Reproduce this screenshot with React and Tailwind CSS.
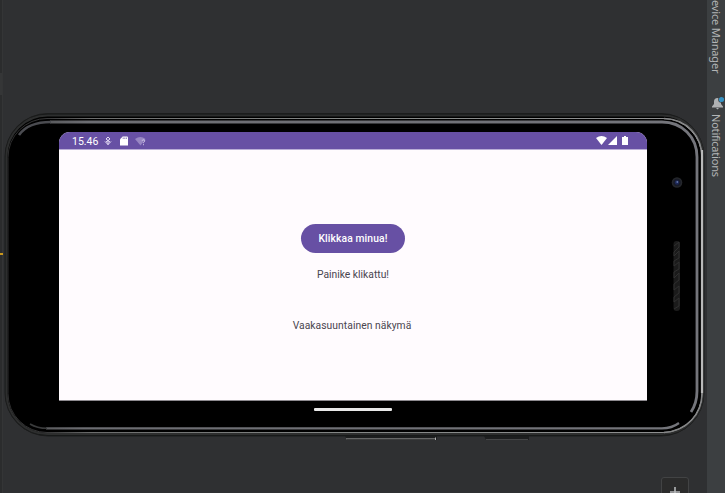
function DeviceFrame() {
  return (
    <svg className="absolute inset-0" width="704" height="493" viewBox="3 0 704 493" fill="none">
      <defs>
        <linearGradient id="edge" x1="0" y1="0" x2="1" y2="0">
          <stop offset="0" stopColor="#5a5b5e" />
          <stop offset="0.06" stopColor="#6c6d72" />
          <stop offset="1" stopColor="#74757b" />
        </linearGradient>
        <linearGradient id="rim" x1="0" y1="0" x2="1" y2="0">
          <stop offset="0" stopColor="#2b2b2c" />
          <stop offset="0.06" stopColor="#39393a" />
          <stop offset="0.12" stopColor="#6c6d6d" />
          <stop offset="0.5" stopColor="#858887" />
          <stop offset="0.95" stopColor="#8e8f90" />
          <stop offset="1" stopColor="#b4b4b4" />
        </linearGradient>
      </defs>
      <path d="M345 436H437V440H347ZM484 436H529V440H486Z" fill="#1d1e1f" />
      <path d="M346 438.800H435" stroke="#858585" />
      <path d="M435.500 437.500V440" stroke="#b0b0b0" />
      <path d="M486 439.500H528" stroke="#454647" />
      <rect x="5" y="113.500" width="699" height="322.500" rx="43" fill="#151616" stroke="#1b1c1c" />
      <rect x="6.500" y="115.500" width="696.500" height="318.500" rx="41" fill="#000" stroke="#2d2e2e" strokeWidth="2" />
      <rect x="8" y="118.500" width="694" height="314" rx="39" fill="#000" stroke="url(#rim)" />
      <path d="M664 118.500C688 119 702 137 702 158V393C702 414 687 431 664 432.500" stroke="#858687" strokeWidth="1.500" />
      <path d="M702 150V393" stroke="#b9b9b9" strokeWidth="2.200" />
      <path d="M50 122H662C682 122 697 137 697 157V391C697 399 695 406 691 412" stroke="url(#edge)" strokeWidth="2.800" />
      <path d="M46 428.300H662C670 428.300 675 426 679 423" stroke="url(#edge)" strokeWidth="2.200" />
      <path d="M19 135C25 126.500 36 122 51 122" stroke="#4a4b50" strokeWidth="2.600" />
      <path d="M30 424C35 427 41 428.300 47 428.300" stroke="#3a3b3c" strokeWidth="1.600" />
      <circle cx="677" cy="182.500" r="5.300" fill="#24262b" />
      <circle cx="677" cy="182.500" r="3.700" fill="#181b27" />
      <circle cx="677" cy="182.500" r="2.200" fill="#1d2858" />
      <circle cx="677.300" cy="182" r="0.900" fill="#6175a8" />
      <rect x="673.500" y="241" width="6.500" height="70" rx="3" fill="#1b1b1b" />
      <path d="M674 246L679 242V247L674 252V256L679 251V258L674 261V266L679 262V269L674 272V278L679 273V280L674 284V290L679 286V293L674 297V302L679 298V306L674 309" stroke="#303030" />
    </svg>
  );
}

function StatusBar() {
  return (
    <div className="flex h-[17px] shrink-0 items-center bg-[#6750a4] pl-[13px] pr-[19px] text-white">
      <span className="mt-[3px] w-[32px] text-[10.5px] leading-none">15.46</span>
      <svg className="mt-px" width="8" height="10" viewBox="0 0 8 10" fill="none" stroke="#e6ddf5" strokeWidth="1">
        <path d="M4 1L6 3L2 6M4 1L2 3L6 6M1 5.500L4 8.500L7 5.500M4 4V9" />
      </svg>
      <svg className="ml-[8px]" width="8" height="10" viewBox="0 0 8 10">
        <path d="M2.700 0.500H7A1 1 0 0 1 8 1.500V9.500H0V3.200Z" fill="#fff" />
        <path d="M3.200 1.500V3M4.800 1.500V3M6.400 1.500V3" stroke="#6750a4" strokeWidth="0.700" />
      </svg>
      <svg className="ml-[7px] mt-px overflow-visible" width="11" height="9" viewBox="0 0 11 9">
        <path d="M0 2Q5.500 -2 10.500 2L5.500 8.500Z" fill="#9887c3" />
        <path d="M7.200 3.700Q7.300 2.800 8.500 2.800Q9.800 2.800 9.800 3.900Q9.800 4.700 8.500 5.500V6.200M8.500 7.200V8.200" fill="none" stroke="#d9d0ec" strokeWidth="0.900" />
      </svg>
      <svg className="ml-auto" width="11" height="9" viewBox="0 0 11 9">
        <path d="M0 2Q5.500 -2 11 2L5.500 9Z" fill="#fff" />
      </svg>
      <svg className="ml-px" width="9" height="9" viewBox="0 0 9 9">
        <path d="M9 0V9H0Z" fill="#fff" />
      </svg>
      <svg className="ml-[5px]" width="6" height="9" viewBox="0 0 6 9">
        <path d="M2 0H4V1H6V9H0V1H2Z" fill="#fff" />
      </svg>
    </div>
  );
}

function PhoneScreen() {
  return (
    <div className="relative ml-[56px] mt-[132px] flex h-[269px] w-[588px] shrink-0 flex-col overflow-hidden rounded-t-[11px] border-b border-[#8d8a8f] bg-[#fffbfe] font-[Roboto,sans-serif]">
      <StatusBar />
      <div className="h-px shrink-0 bg-[#b9add6]" />
      <div className="flex flex-col items-center pt-[74px] text-[#49454f]">
        <button className="h-[29px] w-[104px] rounded-full bg-[#6750a4] pt-[2px] text-[10.3px] font-medium leading-none tracking-[0.12px] text-white">
          Klikkaa minua!
        </button>
        <p className="mt-[14px] text-[10.3px] leading-[16px]">Painike klikattu!</p>
        <p className="mr-[2px] mt-[35px] text-[10.3px] leading-[16px] tracking-[0.05px]">Vaakasuuntainen näkymä</p>
      </div>
    </div>
  );
}

function ToolStrip() {
  return (
    <aside className="flex w-[18px] shrink-0 flex-col items-center bg-[#3c3f41] font-['Noto_Sans',sans-serif] text-[11px] leading-[14px] text-[#b3b5b6]">
      <div className="flex h-[73px] w-[18px] shrink-0 items-end justify-center">
        <span className="whitespace-nowrap tracking-[-0.15px] [writing-mode:vertical-rl]">evice Manager</span>
      </div>
      <svg className="ml-[3px] mt-[23px] shrink-0" width="13" height="14" viewBox="0 0 13 14">
        <path d="M1 10.500L3 8V5.500Q3 2 6.500 2Q10 2 10 5.500V8L12 10.500V11.500H1ZM5 12H8L6.500 13.500Z" fill="#afb1b3" />
        <circle cx="10.500" cy="3.500" r="3.300" fill="#3c3f41" />
        <circle cx="10.500" cy="3.500" r="2.600" fill="#3592c4" />
      </svg>
      <span className="mt-[4px] whitespace-nowrap tracking-[-0.2px] [writing-mode:vertical-rl]">Notifications</span>
    </aside>
  );
}

export default function App() {
  return (
    <div className="flex h-[493px] w-[725px] overflow-hidden bg-[#2f3032]">
      <div className="flex w-[3px] shrink-0 flex-col border-r border-[#343536] bg-[#2b2c2d]">
        <div className="mt-[73px] h-[22px] bg-[#353637]" />
        <div className="mt-[158px] h-[2px] w-[3px] bg-[#c9971c]" />
      </div>
      <main className="relative flex w-[704px] shrink-0 flex-col">
        <DeviceFrame />
        <PhoneScreen />
        <div className="relative mx-auto mt-[7px] h-[3px] w-[78px] shrink-0 -translate-x-[2px] rounded-[1px] bg-[#e9e9e9]" />
        <button className="ml-[658px] mt-[66px] flex h-[28px] w-[28px] shrink-0 justify-center rounded-[3px] border border-[#424344] bg-[#2b2b2b] pt-[8px]">
          <svg width="12" height="12" viewBox="0 0 12 12" stroke="#b5b7b9" strokeWidth="1.600">
            <path d="M6 1V11M1 6H11" />
          </svg>
        </button>
      </main>
      <ToolStrip />
    </div>
  );
}
